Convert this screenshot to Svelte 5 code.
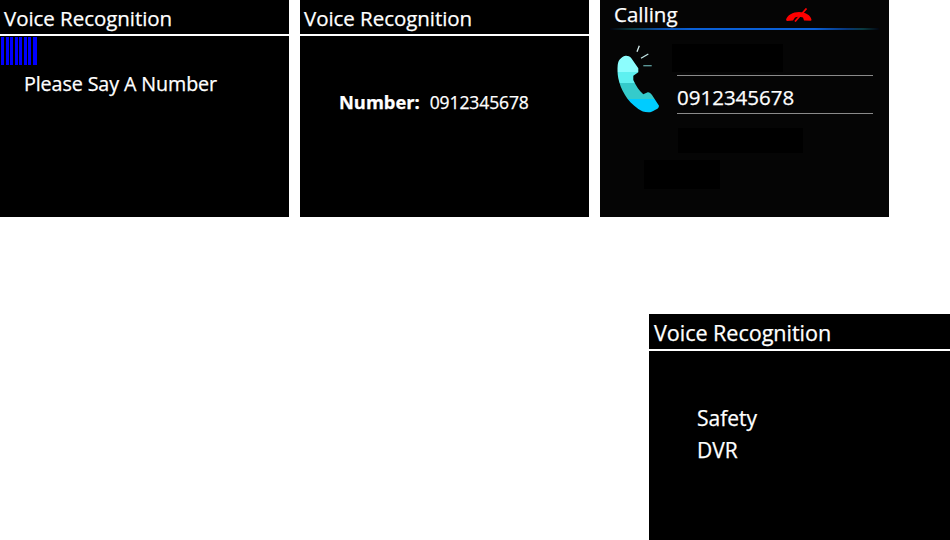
<script>
  const bars = [
    { x: 1, w: 3 }, { x: 6, w: 3 }, { x: 10, w: 3 }, { x: 15, w: 3 },
    { x: 19, w: 3 }, { x: 24, w: 3 }, { x: 28, w: 3 }, { x: 33, w: 4 }
  ];
</script>

<main class="page">
  <div class="row">
    <section class="panel">
      <header class="head">Voice Recognition</header>
      <svg class="bars" width="40" height="28" viewBox="0 0 40 28">
        {#each bars as b (b.x)}<rect x={b.x} y="0" width={b.w} height="28" fill="#0000ff" />{/each}
      </svg>
      <p class="say">Please Say A Number</p>
    </section>

    <section class="panel">
      <header class="head">Voice Recognition</header>
      <p class="number"><b>Number:</b><span>0912345678</span></p>
    </section>

    <section class="panel calling">
      <header class="call-head">
        <span class="call-title">Calling</span>
        <svg class="hangup" width="26" height="14" viewBox="0 0 26 14">
          <path fill="#f00" d="M0 12 C1 7 7 4 13 4 C19 4 25 7 25.500 12 L25 12.800 L18 12.500 L17 9.500 C14 8.500 11 8.500 9 9.500 L7 12.500 L1 13 Z" />
          <path stroke="#f00" stroke-width="1.800" fill="none" d="M9 13.500 L20.500 0.500" />
        </svg>
      </header>
      <div class="rule"></div>
      <div class="call-body">
        <svg class="phone" width="46" height="72" viewBox="0 0 46 72">
          <defs>
            <linearGradient id="bands" gradientUnits="userSpaceOnUse" x1="0" y1="0" x2="0" y2="72">
              <stop offset="0.389" stop-color="#8cfdfd" />
              <stop offset="0.389" stop-color="#5ef0f0" />
              <stop offset="0.54" stop-color="#5ef0f0" />
              <stop offset="0.54" stop-color="#35cbcb" />
              <stop offset="0.757" stop-color="#35cbcb" />
              <stop offset="0.757" stop-color="#00ccff" />
            </linearGradient>
          </defs>
          <path fill="url(#bands)" d="M9.700 11.700 C11.500 11.500 14 12.500 15 13.700 L22.300 24.300 L22.300 28.300 L17.300 31.700 L17.300 36 C20 42 23.500 47 27.300 50.300 L31.700 48.300 C33 48 34.500 49 36 51 L43 61.700 C43 64 41 65 39 66 C36 68 34 68.500 32.300 68.300 C28.500 68.300 25 67 22.300 65 C16 60.500 12 56 9 51 C5.500 45.500 3.500 40 2.300 34.300 C1.500 30 1.300 25 1.700 21 C2 18 3 16 5 14.300 C6.500 12.800 8 12 9.700 11.700 Z" />
          <g stroke-width="1.300" fill="none">
            <path stroke="#d4ecec" d="M23.300 1.700 L21 7.700" />
            <path stroke="#c4e8e8" d="M32.300 10 L25 14.300" />
            <path stroke="#5f9f9f" d="M27.300 21.700 L35.700 21.700" />
          </g>
        </svg>
        <div class="call-info">
          <div class="mask mask-a"></div>
          <div class="num-line">0912345678</div>
          <div class="mask mask-b"></div>
          <div class="mask mask-c"></div>
        </div>
      </div>
    </section>
  </div>

  <section class="panel last">
    <header class="head">Voice Recognition</header>
    <ul class="menu">
      <li>Safety</li>
      <li>DVR</li>
    </ul>
  </section>
</main>

<style>
  :global(body) {
    margin: 0;
    background: #fff;
  }
  .page {
    width: 950px;
    height: 540px;
    overflow: hidden;
    font-family: "Open Sans", "Noto Sans", sans-serif;
    color: #fff;
    -webkit-text-stroke: 0.25px #fff;
  }
  .row {
    display: flex;
    gap: 11px;
  }
  .panel {
    width: 289px;
    height: 217px;
    background: #000;
    flex: none;
  }
  .head {
    box-sizing: border-box;
    height: 36px;
    padding-left: 4px;
    font-size: 20.500px;
    line-height: 36px;
    border-bottom: 2px solid #fff;
    letter-spacing: -0.05px;
  }
  .bars {
    display: block;
    margin-top: 1px;
  }
  .say {
    margin: 6px 0 0 24px;
    font-size: 19.700px;
    line-height: 26px;
    letter-spacing: -0.1px;
  }
  .number {
    display: flex;
    align-items: baseline;
    gap: 10px;
    margin: 53px 0 0 39px;
    line-height: 26px;
    font-size: 18.300px;
  }
  .number b {
    font-weight: 700;
  }
  .number span {
    font-size: 17.500px;
    letter-spacing: -0.1px;
  }
  .calling {
    background: #050505;
  }
  .call-head {
    display: flex;
    align-items: center;
    height: 28px;
    padding-left: 14px;
    font-size: 20.500px;
  }
  .call-title {
    width: 172px;
  }
  .hangup {
    margin-top: 1px;
  }
  .rule {
    height: 2px;
    margin: 0 10px;
    background: linear-gradient(90deg, #020410 0, #0a3a3f 8%, #0b4fa8 18%, #0a60d8 30%, #0a60d8 76%, #07367a 88%, #0a3a3f 94%, #020410 100%);
  }
  .call-body {
    display: flex;
    padding: 14px 0 0 16px;
  }
  .phone {
    flex: none;
    margin-right: 15px;
  }
  .call-info {
    width: 196px;
  }
  .mask {
    background: #000;
  }
  .mask-a {
    width: 111px;
    height: 28px;
    margin-left: -5px;
  }
  .num-line {
    box-sizing: border-box;
    height: 39px;
    margin-top: 3px;
    border-top: 1px solid #8a8a8a;
    border-bottom: 1px solid #8a8a8a;
    font-size: 20.500px;
    line-height: 43px;
  }
  .mask-b {
    width: 125px;
    height: 25px;
    margin: 14px 0 0 1px;
  }
  .mask-c {
    width: 76px;
    height: 29px;
    margin: 7px 0 0 -33px;
  }
  .last {
    width: 301px;
    height: 226px;
    margin: 97px 0 0 649px;
  }
  .last .head {
    height: 37px;
    padding-left: 5px;
    font-size: 21.600px;
    line-height: 38px;
  }
  .menu {
    list-style: none;
    margin: 0;
    padding: 51px 0 0 48px;
    font-size: 21px;
    line-height: 32px;
  }
</style>
